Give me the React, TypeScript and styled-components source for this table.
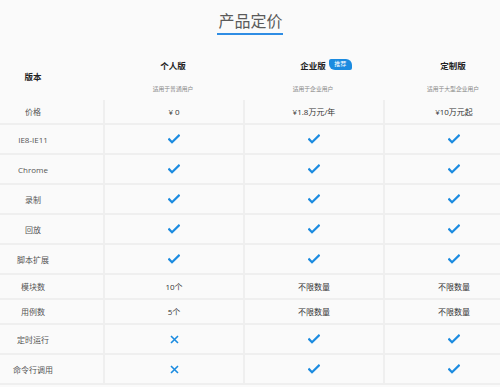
import styled, { createGlobalStyle } from "styled-components";

const GlobalStyle = createGlobalStyle`
  html, body {
    margin: 0;
    padding: 0;
    overflow: hidden;
    background: #fafafa;
  }
  body {
    font-family: "Open Sans", "Noto Sans CJK SC", sans-serif;
  }
`;

type CellValue = string | "check" | "cross";

interface PlanRow {
  label: string;
  values: CellValue[];
  tall?: boolean;
}

const plans = [
  { name: "个人版", desc: "适用于普通用户" },
  { name: "企业版", desc: "适用于企业用户", badge: "推荐" },
  { name: "定制版", desc: "适用于大型企业用户" },
];

const rows: PlanRow[] = [
  { label: "价格", values: ["¥ 0", "¥1.8万元/年", "¥10万元起"] },
  { label: "IE8-IE11", values: ["check", "check", "check"], tall: true },
  { label: "Chrome", values: ["check", "check", "check"], tall: true },
  { label: "录制", values: ["check", "check", "check"], tall: true },
  { label: "回放", values: ["check", "check", "check"], tall: true },
  { label: "脚本扩展", values: ["check", "check", "check"], tall: true },
  { label: "模块数", values: ["10个", "不限数量", "不限数量"] },
  { label: "用例数", values: ["5个", "不限数量", "不限数量"] },
  { label: "定时运行", values: ["cross", "check", "check"], tall: true },
  { label: "命令行调用", values: ["cross", "check", "check"], tall: true },
];

const CheckIcon = () => (
  <svg width="12" height="10" viewBox="0 0 12 10">
    <path
      d="M1.2 5.4 L4 8.2 L10.8 1.6"
      fill="none"
      stroke="#1b8be0"
      strokeWidth="2.2"
      strokeLinecap="square"
    />
  </svg>
);

const CrossIcon = () => (
  <svg width="9" height="9" viewBox="0 0 9 9">
    <path
      d="M1 1 L8 8 M8 1 L1 8"
      fill="none"
      stroke="#1b8be0"
      strokeWidth="1.6"
    />
  </svg>
);

const renderValue = (value: CellValue) => {
  if (value === "check") return <CheckIcon />;
  if (value === "cross") return <CrossIcon />;
  return value;
};

const App = () => {
  return (
    <Page>
      <GlobalStyle />
      <TitleBar>
        <Title>产品定价</Title>
      </TitleBar>

      <Table>
        <HeaderRow>
          <VersionCell>版本</VersionCell>
          {plans.map((plan) => (
            <PlanCell key={plan.name}>
              <PlanName>
                {plan.name}
                {plan.badge && <Badge>{plan.badge}</Badge>}
              </PlanName>
              <PlanDesc>{plan.desc}</PlanDesc>
            </PlanCell>
          ))}
        </HeaderRow>

        {rows.map((row) => (
          <Row key={row.label} $tall={row.tall}>
            <LabelCell>{row.label}</LabelCell>
            {row.values.map((value, i) => (
              <ValueCell key={i}>{renderValue(value)}</ValueCell>
            ))}
          </Row>
        ))}
      </Table>
    </Page>
  );
};

const Page = styled.div`
  width: 500px;
  height: 387px;
  overflow: hidden;
  background: #fafafa;
`;

const TitleBar = styled.div`
  display: flex;
  justify-content: center;
  padding-top: 10px;
`;

const Title = styled.h1`
  margin: 0;
  padding: 0 0 1px 1px;
  font-size: 16px;
  line-height: 22px;
  font-weight: 400;
  color: #5a5a5a;
  border-bottom: 2px solid #2f8de4;
`;

const Table = styled.div`
  width: 560px;
  margin-left: -37px;
`;

const HeaderRow = styled.div`
  display: grid;
  grid-template-columns: repeat(4, 140px);
  height: 65px;
`;

const VersionCell = styled.div`
  padding-top: 36px;
  text-align: center;
  font-size: 8.5px;
  line-height: 12px;
  font-weight: 700;
  color: #222;
`;

const PlanCell = styled.div`
  display: flex;
  flex-direction: column;
  align-items: center;
  padding-top: 25px;
`;

const PlanName = styled.div`
  position: relative;
  font-size: 8.5px;
  line-height: 12px;
  font-weight: 700;
  color: #222;
`;

const Badge = styled.span`
  position: absolute;
  left: calc(100% + 3px);
  top: -1px;
  width: 23px;
  height: 11px;
  display: flex;
  align-items: center;
  justify-content: center;
  background: #1b8be0;
  color: #fff;
  font-size: 6px;
  font-weight: 400;
  line-height: 11px;
  border-radius: 2px 6px 2px 6px;
`;

const PlanDesc = styled.div`
  margin-top: 12px;
  font-size: 5.8px;
  line-height: 10px;
  color: #888;
`;

const Row = styled.div<{ $tall?: boolean }>`
  display: grid;
  grid-template-columns: repeat(4, 140px);
  height: ${({ $tall }) => ($tall ? "30px" : "25px")};
  box-sizing: border-box;
  border-bottom: 2px solid #efefef;
`;

const LabelCell = styled.div`
  display: flex;
  align-items: center;
  justify-content: center;
  font-size: 8px;
  color: #555;
`;

const ValueCell = styled.div`
  display: flex;
  align-items: center;
  justify-content: center;
  border-left: 2px solid #efefef;
  font-size: 8px;
  color: #333;
`;

export default App;
